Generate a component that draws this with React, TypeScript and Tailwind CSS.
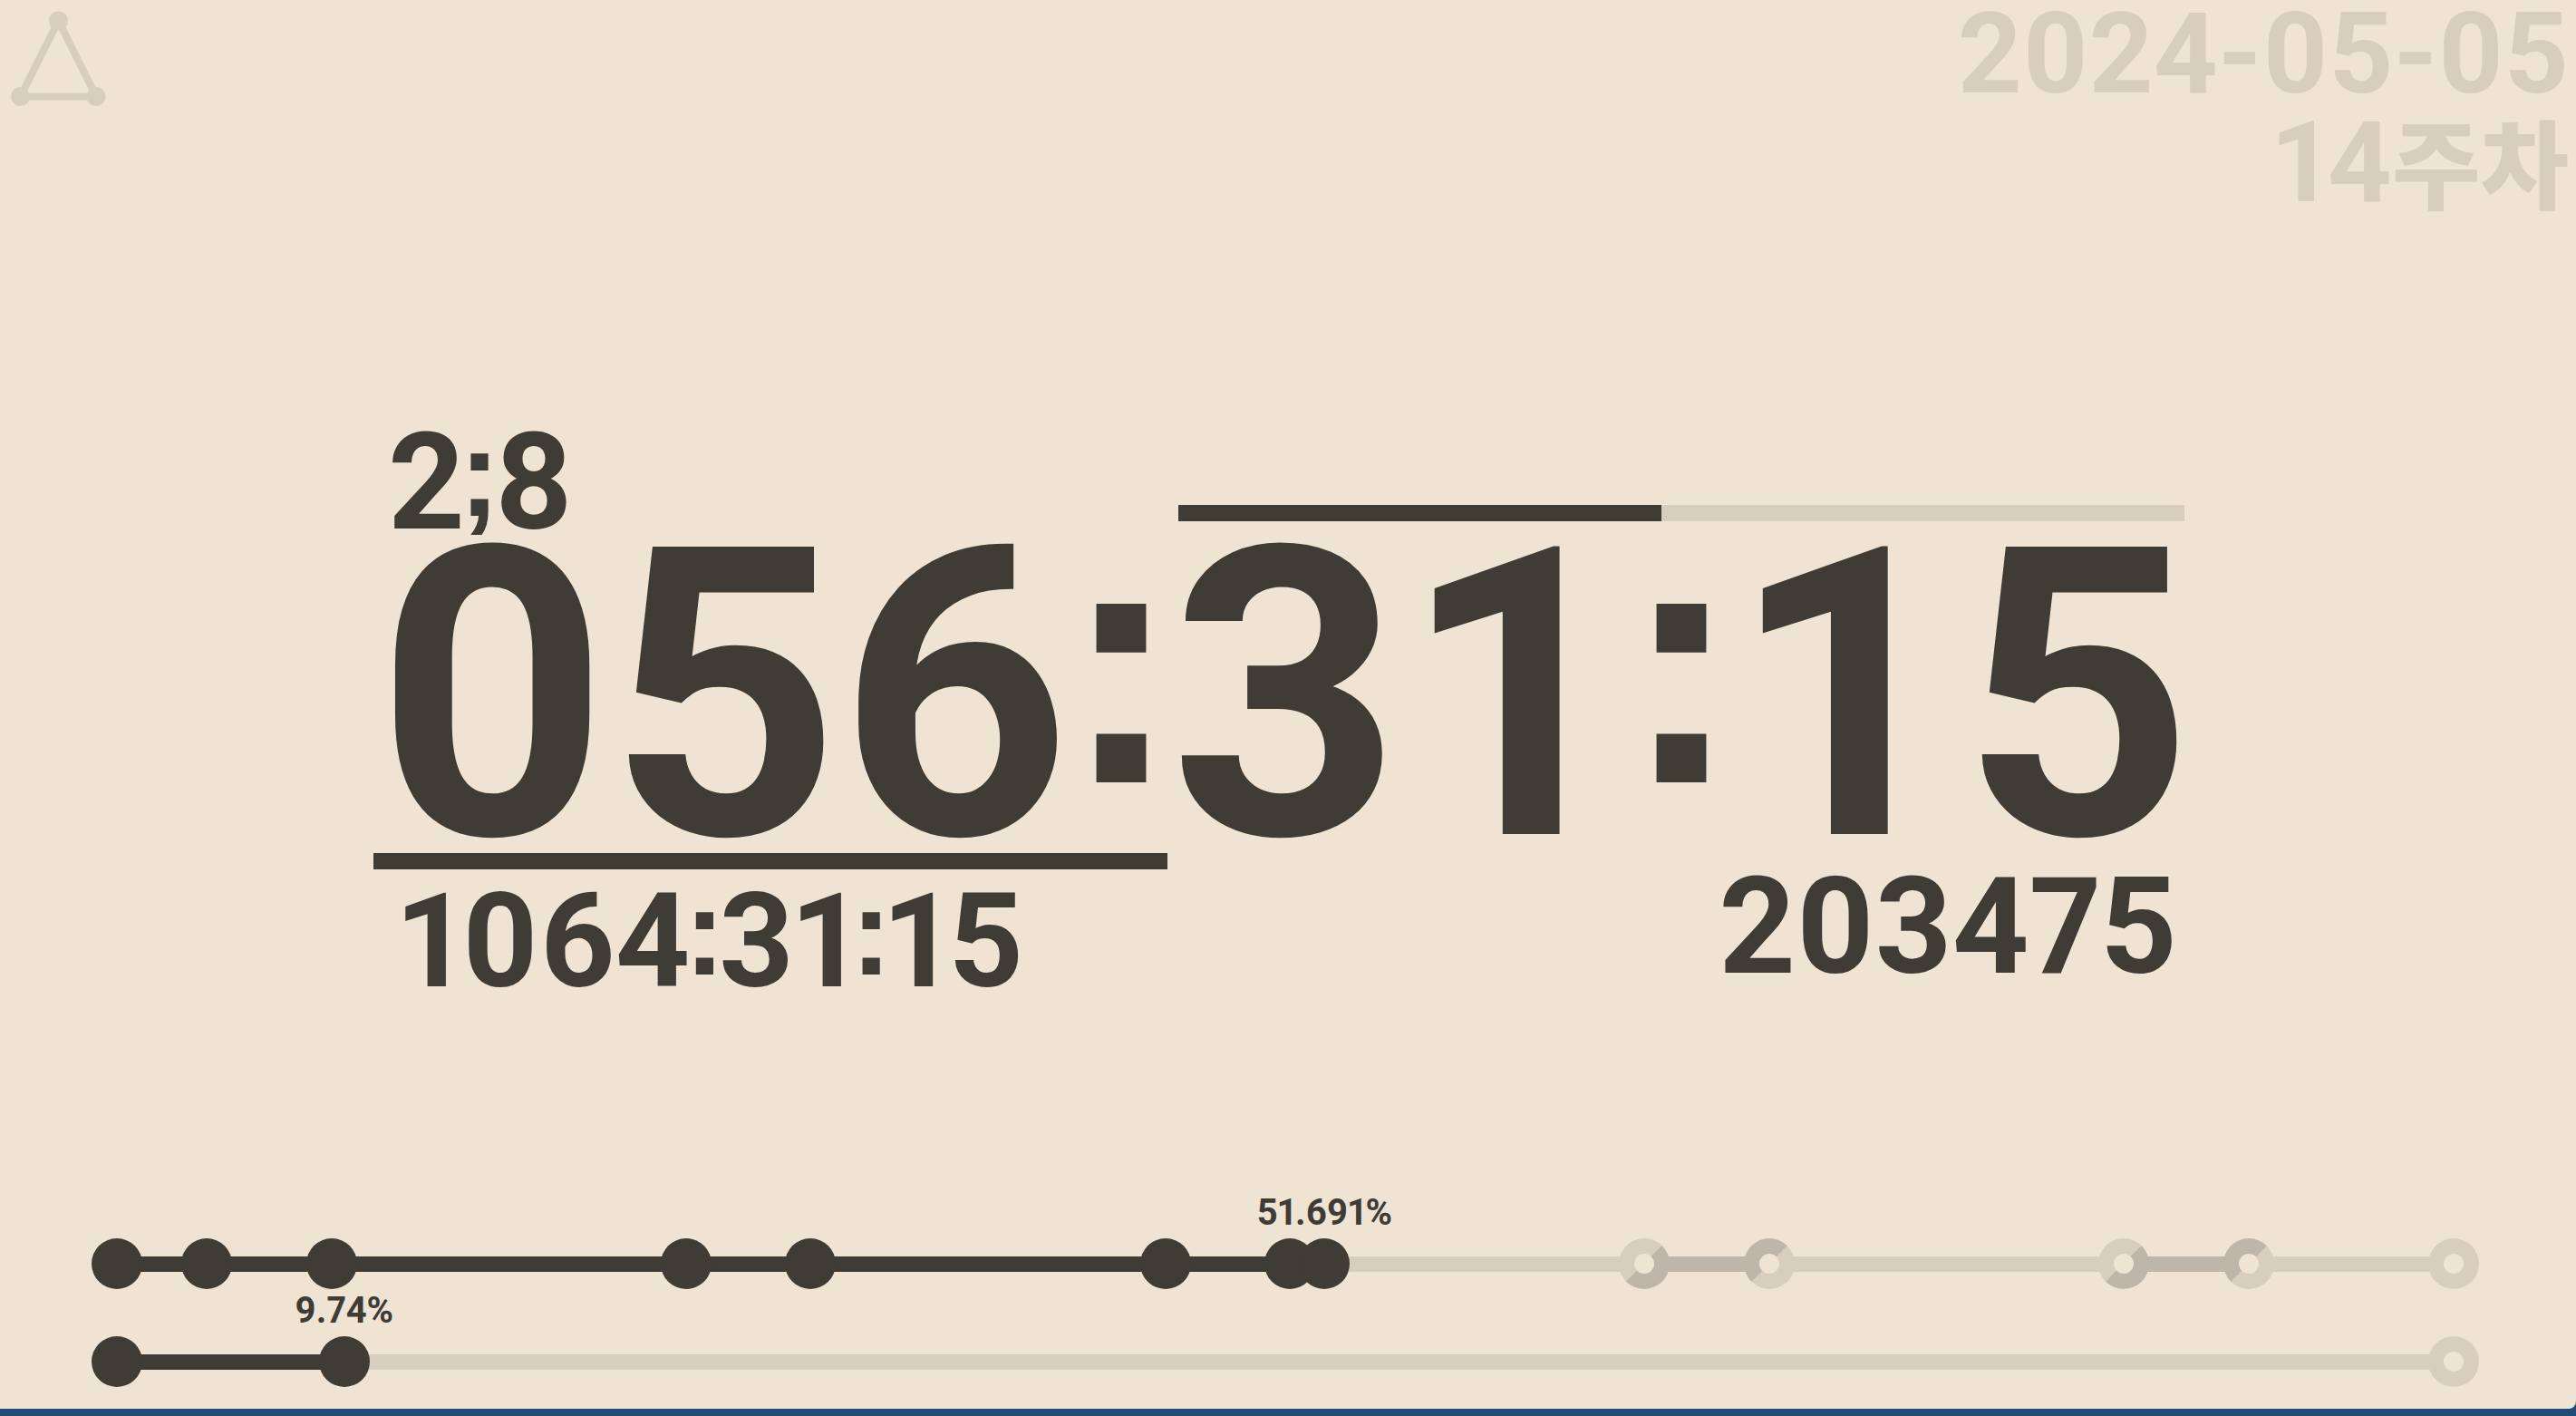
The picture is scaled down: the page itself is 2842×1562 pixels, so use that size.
import React from "react";

type NodeKind = "done" | "split-start" | "split-end" | "open";
type TrackNode = { at: number; kind: NodeKind };
type Span = { from: number; to: number };

const dayNodes: TrackNode[] = [
  { at: 0, kind: "done" },
  { at: 3.85, kind: "done" },
  { at: 9.19, kind: "done" },
  { at: 24.36, kind: "done" },
  { at: 29.7, kind: "done" },
  { at: 44.88, kind: "done" },
  { at: 50.21, kind: "done" },
  { at: 51.691, kind: "done" },
  { at: 65.38, kind: "split-start" },
  { at: 70.72, kind: "split-end" },
  { at: 85.9, kind: "split-start" },
  { at: 91.24, kind: "split-end" },
  { at: 100, kind: "open" },
];

const dayBreaks: Span[] = [
  { from: 65.38, to: 70.72 },
  { from: 85.9, to: 91.24 },
];

const yearNodes: TrackNode[] = [
  { at: 0, kind: "done" },
  { at: 9.74, kind: "done" },
  { at: 100, kind: "open" },
];

const nodeFill: Record<NodeKind, string> = {
  done: "bg-[#3f3b35]",
  open: "bg-[#d8cebe]",
  "split-start": "bg-[linear-gradient(135deg,#d8cebe_50%,#beb6a8_50%)]",
  "split-end": "bg-[linear-gradient(135deg,#beb6a8_50%,#d8cebe_50%)]",
};

function Track(props: {
  name: string;
  value: number;
  nodes: TrackNode[];
  breaks?: Span[];
}) {
  const { name, value, nodes, breaks = [] } = props;
  return (
    <div
      role="progressbar"
      aria-label={name}
      aria-valuenow={value}
      aria-valuemin={0}
      aria-valuemax={100}
      className="relative flex h-14 items-center"
    >
      <div className="h-[17px] w-full bg-[#d8cebe]">
        <div className="h-full bg-[#3f3b35]" style={{ width: `${value}%` }} />
      </div>
      {breaks.map((b) => (
        <div
          key={b.from}
          className="absolute h-[17px] bg-[#beb6a8]"
          style={{ left: `${b.from}%`, width: `${b.to - b.from}%` }}
        />
      ))}
      {nodes.map((n) => (
        <div
          key={n.at}
          className={`absolute flex size-14 -translate-x-1/2 items-center justify-center rounded-full ${nodeFill[n.kind]}`}
          style={{ left: `${n.at}%` }}
        >
          {n.kind !== "done" && (
            <div className="size-[22px] rounded-full bg-[#efe3d3]" />
          )}
        </div>
      ))}
      <div
        className="absolute bottom-full -translate-x-1/2 pb-2.5 text-[40px] leading-[36px] whitespace-nowrap"
        style={{ left: `${value}%` }}
      >
        {value}%
      </div>
    </div>
  );
}

function BigColon() {
  return (
    <span className="mb-20 flex w-[102px] justify-center font-['Liberation_Sans',sans-serif] text-[390px] leading-[234px]">
      :
    </span>
  );
}

function SmallMark({ children }: { children: string }) {
  return (
    <span className="mb-[22px] flex w-8 justify-center font-['Liberation_Sans',sans-serif] text-[136px] leading-[90px]">
      {children}
    </span>
  );
}

export default function App() {
  return (
    <div className="bg-[#214b79]">
      <div className="flex min-h-screen flex-col border-b-8 border-[#214b79] font-['Roboto','Noto_Sans_CJK_KR',sans-serif] font-bold text-[#3f3b35] proportional-nums">
        <div className="flex flex-1 flex-col rounded-br-lg bg-[#efe3d3]">
          <header className="flex flex-1 basis-0 items-start justify-between text-[#d8cebe]">
            <a href="#" aria-label="Home" className="p-2">
              <svg viewBox="0 0 112 112" className="size-28" fill="currentColor">
                <path
                  d="M56.5 15 14.5 98.5H98Z"
                  fill="none"
                  stroke="currentColor"
                  strokeWidth="8"
                />
                <circle cx="56.5" cy="15" r="10.5" />
                <circle cx="14.5" cy="98.5" r="10.5" />
                <circle cx="98" cy="98.5" r="10.5" />
              </svg>
            </a>
            <div className="pr-2 text-right text-[124px] leading-[120px]">
              <time dateTime="2024-05-05" className="block">
                2024-05-05
              </time>
              <div>
                14<span className="text-[106px] font-black">주차</span>
              </div>
            </div>
          </header>

          <main className="mx-auto grid grid-cols-[876px_1134px] pt-9 pr-2">
            <div className="flex items-center pt-1.5 pb-[18px] pl-4 text-[148px] leading-[112px]">
              <span>2</span>
              <SmallMark>;</SmallMark>
              <span>8</span>
            </div>
            <div className="mx-3 mb-8 flex h-[18px] self-end bg-[#d8cebe]">
              <div className="w-[48%] bg-[#3f3b35]" />
            </div>

            <div
              role="timer"
              className="col-span-2 flex items-center pt-1 text-[446px] leading-[314px]"
            >
              <span className="w-[774px] text-center tabular-nums">056</span>
              <BigColon />
              <span className="w-[516px] text-center tabular-nums">31</span>
              <BigColon />
              <span className="w-[516px] text-center tabular-nums">15</span>
            </div>

            <div className="pt-4">
              <div className="h-[18px] bg-[#3f3b35]" />
              <div className="flex items-center pt-6 pl-7 text-[144px] leading-[112px]">
                <span>1064</span>
                <SmallMark>:</SmallMark>
                <span>31</span>
                <SmallMark>:</SmallMark>
                <span>15</span>
              </div>
            </div>
            <div className="pt-[42px] pr-5 text-right text-[148px] leading-[112px]">
              203475
            </div>
          </main>

          <footer className="flex flex-1 basis-0 flex-col justify-end gap-[52px] pr-[4.75%] pb-6 pl-[4.53%]">
            <Track
              name="Day"
              value={51.691}
              nodes={dayNodes}
              breaks={dayBreaks}
            />
            <Track name="Year" value={9.74} nodes={yearNodes} />
          </footer>
        </div>
      </div>
    </div>
  );
}
